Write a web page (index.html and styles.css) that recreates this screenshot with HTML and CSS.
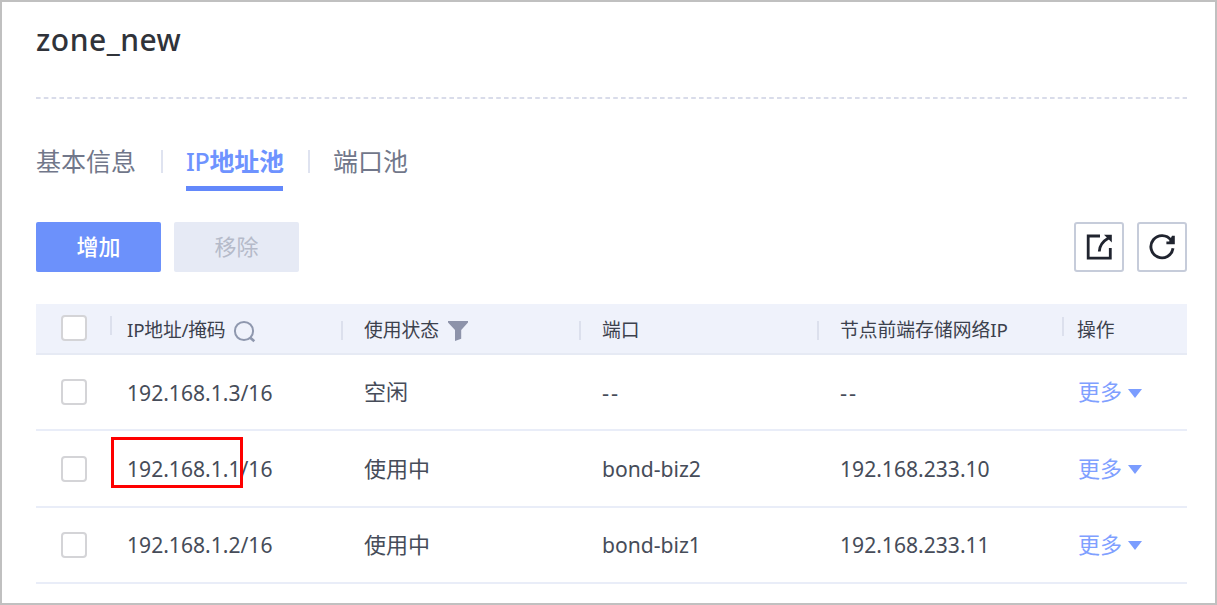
FILE: index.html
```
<!DOCTYPE html>
<html lang="zh-CN">
<head>
<meta charset="utf-8">
<title>zone_new</title>
<link rel="stylesheet" href="styles.css">
</head>
<body>
<main class="panel">
  <h1 class="title">zone_new</h1>
  <svg class="rule" width="1151" height="2"><path d="M0 1H1151" stroke="#d9dcea" stroke-width="2" stroke-dasharray="4.6 3.2"/></svg>
  <nav class="tabs">
    <a class="tab">基本信息</a>
    <i class="tab-sep"></i>
    <a class="tab active"><span class="latin">IP</span>地址池</a>
    <i class="tab-sep"></i>
    <a class="tab">端口池</a>
  </nav>
  <div class="toolbar">
    <button class="btn primary">增加</button>
    <button class="btn disabled">移除</button>
    <button class="icon-btn first" aria-label="导出"><svg width="46" height="46" viewBox="0 0 46 46"><path d="M24 12H12.2V34.2H34.3V24" fill="none" stroke="#20242f" stroke-width="2.8"/><path d="M23.3 27.5C23.5 22 27 17.2 32.5 14" fill="none" stroke="#20242f" stroke-width="2.8"/><path d="M28 10.8H35.8V18.4Z" fill="#20242f"/></svg></button>
    <button class="icon-btn" aria-label="刷新"><svg width="46" height="46" viewBox="0 0 46 46"><path d="M34 24.3A11.1 11.1 0 1 1 32 16.2" fill="none" stroke="#20242f" stroke-width="2.9"/><path d="M33 11.8H35.8V20.2H27.4V17.6H30.2Z" fill="#20242f"/></svg></button>
  </div>
  <section class="table">
    <div class="row head">
      <div class="cell check"><span class="box"></span></div>
      <div class="cell high">IP地址/掩码<svg class="search" width="24" height="24" viewBox="0 0 24 24"><circle cx="11" cy="11" r="9.1" fill="none" stroke="#8f98ae" stroke-width="2"/><path d="M17 17.5L21.3 21.2" stroke="#8f98ae" stroke-width="2.7"/></svg></div>
      <div class="cell">使用状态<svg class="filter" width="20" height="22" viewBox="0 0 20 22"><path d="M0 1H20V2.5L13.2 10V18.7L7 21V10L0 2.5Z" fill="#8d93aa"/></svg></div>
      <div class="cell">端口</div>
      <div class="cell">节点前端存储网络IP</div>
      <div class="cell high">操作</div>
    </div>
    <div class="row">
      <div class="cell check"><span class="box"></span></div>
      <div class="cell num">192.168.1.3/16</div>
      <div class="cell zh">空闲</div>
      <div class="cell dash">--</div>
      <div class="cell dash">--</div>
      <div class="cell more">更多<i class="caret"></i></div>
    </div>
    <div class="row">
      <div class="cell check"><span class="box"></span></div>
      <div class="cell num marked">192.168.1.1/16</div>
      <div class="cell zh">使用中</div>
      <div class="cell port">bond-biz2</div>
      <div class="cell num">192.168.233.10</div>
      <div class="cell more">更多<i class="caret"></i></div>
    </div>
    <div class="row">
      <div class="cell check"><span class="box"></span></div>
      <div class="cell num">192.168.1.2/16</div>
      <div class="cell zh">使用中</div>
      <div class="cell port">bond-biz1</div>
      <div class="cell num">192.168.233.11</div>
      <div class="cell more">更多<i class="caret"></i></div>
    </div>
  </section>
</main>
</body>
</html>
```
FILE: styles.css
```
*, *::before, *::after { box-sizing: border-box; }
body {
  margin: 0;
  background: #fff;
  font-family: "Noto Sans", "Noto Sans CJK SC", sans-serif;
  color: #464c59;
}
.panel {
  width: 1217px;
  height: 605px;
  border: 2px solid #c0c0c0;
  padding: 17px 28px 0 34px;
  overflow: hidden;
}
.title {
  margin: 0;
  height: 41px;
  line-height: 41px;
  font-size: 30px;
  font-weight: 500;
  letter-spacing: 0.5px;
  color: #30333a;
}
.rule { display: block; margin-top: 37px; }
.tabs {
  display: flex;
  align-items: flex-start;
  height: 47px;
  margin-top: 45px;
  font-size: 25px;
  color: #71778a;
}
.tab { height: 47px; line-height: 35px; white-space: nowrap; }
.tab.active {
  color: #6e93ff;
  font-weight: 700;
  letter-spacing: -0.3px;
  width: 97px;
  border-bottom: 5px solid #6388fb;
}
.latin { font-weight: 500; }
.tab-sep { width: 2px; height: 23px; margin: 6px 23px 0 25px; background: #dfe3f0; }
.active + .tab-sep { margin-left: 25px; }
.toolbar { display: flex; align-items: center; height: 50px; margin-top: 31px; }
.btn {
  width: 125px;
  height: 50px;
  margin-right: 13px;
  padding: 0 0 5px;
  border: 0;
  border-radius: 2px;
  font: 22px "Noto Sans CJK SC", sans-serif;
}
.primary { background: #6c91fb; color: #fff; font-weight: 500; }
.disabled { background: #e6eaf5; color: #b5bac9; }
.icon-btn {
  width: 50px;
  height: 50px;
  margin-left: 13px;
  padding: 0;
  border: 2px solid #c6ccda;
  border-radius: 3px;
  background: #fff;
}
.icon-btn svg { display: block; }
.icon-btn.first { margin-left: auto; }
.table { margin-top: 32px; width: 1151px; }
.row {
  display: grid;
  grid-template-columns: 74px 231px 238px 238px 245px 1fr;
  align-items: center;
  height: 76.4px;
  border-bottom: 2px solid #e9edf8;
  font-size: 22px;
}
.cell { position: relative; display: flex; align-items: center; white-space: nowrap; padding-left: 23px; }
.cell.num, .cell.port { font-size: 21.1px; }
.row .cell:nth-child(2) { padding-left: 17px; }
.zh, .more { padding-bottom: 4px; }
.dash { letter-spacing: 1.8px; }
.head { height: 51px; background: #eff2fb; font-size: 18.8px; color: #3c414d; border-bottom-color: #e6eaf4; }
.head .cell:nth-child(2) { letter-spacing: -0.2px; }
.head .cell:not(.check)::before {
  content: "";
  position: absolute;
  left: 0;
  top: 6px;
  width: 1.5px;
  height: 19px;
  background: #dce0ed;
}
.head .cell.high::before { top: 2px; }
.head .cell:last-child { padding-left: 15px; }
.row .check { padding-left: 25px; }
.head .check { padding-bottom: 2px; }
.box { width: 26px; height: 26px; border: 2px solid #d4d4d7; border-radius: 4px; background: #fff; }
.search { margin: 6px 0 0 8px; }
.filter { margin: 4px 0 0 9px; }
.row .more { color: #7fa0ff; padding-left: 16px; }
.caret { margin: 6px 0 0 6px; border: 7.5px solid transparent; border-top: 9px solid #7b9dff; border-bottom: 0; }
.marked::after {
  content: "";
  position: absolute;
  left: 1px;
  top: -17px;
  width: 132px;
  height: 51px;
  border: 3px solid #fe0000;
}
```
